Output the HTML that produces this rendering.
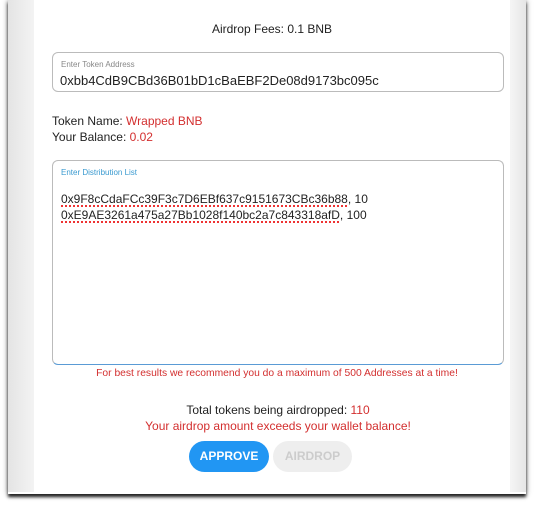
<!DOCTYPE html>
<html><head><style>
*{box-sizing:border-box;margin:0;padding:0}
body{width:534px;height:508px;background:#fff;font-family:"Liberation Sans",sans-serif;position:relative;overflow:hidden;color:#222}
.win{position:absolute;left:8px;top:0;width:518px;height:494px;background:#fff;box-shadow:0 3px 3px #222,0 0 6px rgba(0,0,0,.4)}
.ls{position:absolute;left:8px;top:0;width:26px;height:492px;background:linear-gradient(90deg,#e4e4e4,#f3f3f3)}
.rs{position:absolute;left:510px;top:0;width:16px;height:492px;background:linear-gradient(90deg,#f5f5f5,#e6e6e6)}
.t{position:absolute;font-size:12px;white-space:nowrap}
.red{color:#d32f2f}
.box{position:absolute;left:52px;width:452px;border:1px solid #bbb;border-radius:6px}
.lbl{position:absolute;font-size:8px;color:#888;left:8px}
.u{text-decoration:underline dotted #e33;text-decoration-thickness:1.5px;text-underline-offset:2px}
.btn{position:absolute;top:441px;height:31px;border-radius:16px;font-size:12px;font-weight:bold;text-align:center;line-height:31px}
</style></head><body>
<div class="win"></div><div class="ls"></div><div class="rs"></div>
<div class="t" style="left:0;width:544px;text-align:center;top:22px">Airdrop Fees: 0.1 BNB</div>
<div class="box" style="top:52px;height:40px">
<div class="lbl" style="top:7px">Enter Token Address</div>
<div class="t" style="left:7px;top:20px;font-size:13px">0xbb4CdB9CBd36B01bD1cBaEBF2De08d9173bc095c</div></div>
<div class="t" style="left:52px;top:114px">Token Name: <span class="red">Wrapped BNB</span></div>
<div class="t" style="left:52px;top:130px">Your Balance: <span class="red">0.02</span></div>
<div class="box" style="top:160px;height:205px;border-bottom:1.5px solid #5a9bd5">
<div class="lbl" style="top:7px;color:#3a9ad0">Enter Distribution List</div>
<div class="t" style="left:8px;top:30px;font-size:12px;line-height:16px"><span class="u">0x9F8cCdaFCc39F3c7D6EBf637c9151673CBc36b88</span>, 10<br><span class="u">0xE9AE3261a475a27Bb1028f140bc2a7c843318afD</span>, 100</div></div>
<div class="t red" style="left:0;width:554px;text-align:center;top:368px;font-size:10.3px">For best results we recommend you do a maximum of 500 Addresses at a time!</div>
<div class="t" style="left:0;width:556px;text-align:center;top:403px">Total tokens being airdropped: <span class="red">110</span></div>
<div class="t red" style="left:0;width:556px;text-align:center;top:419px">Your airdrop amount exceeds your wallet balance!</div>
<div class="btn" style="left:189px;width:80px;background:#2196f3;color:#fff">APPROVE</div>
<div class="btn" style="left:273px;width:79px;background:#eee;color:#ccc">AIRDROP</div>
</body></html>
